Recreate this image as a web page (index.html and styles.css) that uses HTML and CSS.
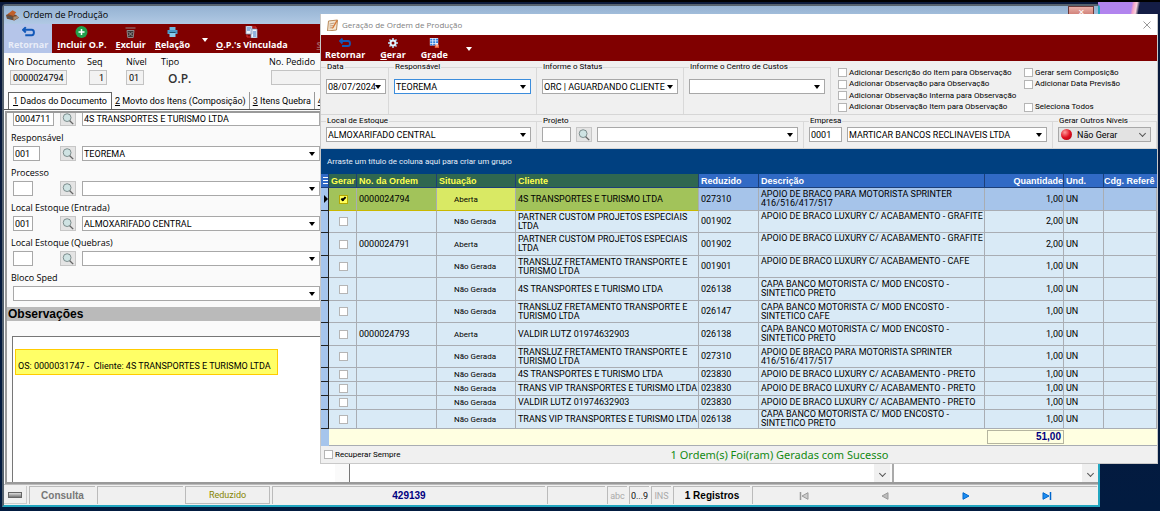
FILE: index.html
```
<!DOCTYPE html>
<html lang="pt-BR">
<head>
    <meta charset="UTF-8">
    <meta name="viewport" content="width=device-width, initial-scale=1.0">
    <title>Ordem de Produção</title>
    <link rel="stylesheet" href="styles.css">
</head>
<body>
    <!-- shared icons -->
    <svg class="sprite" width="0" height="0">
        <symbol id="icon-return" viewBox="0 0 12 10"><path d="M3.5 .5 1 3l2.500 2.500M1.500 3H9q2 0 2 2.500T9 8H3" fill="none" stroke="#1258b8" stroke-width="1.800"/></symbol>
        <symbol id="icon-search" viewBox="0 0 16 15"><circle cx="7" cy="6.500" r="4.500" fill="#cfe3e3" stroke="#6f7f80"/><path d="m10 10 4 4" stroke="#666" stroke-width="1.600"/></symbol>
        <symbol id="icon-first" viewBox="0 0 10 8"><path d="M1.500 0v8" stroke="currentColor" stroke-width="1.500"/><path d="M9 .7v6.600L3 4z" fill="#ccc" stroke="currentColor"/></symbol>
        <symbol id="icon-prev" viewBox="0 0 10 8"><path d="M8 .7v6.600L2 4z" fill="#bbb" stroke="currentColor"/></symbol>
        <symbol id="icon-next" viewBox="0 0 10 8"><path d="M2 .7v6.600L8 4z" fill="#1b8cf0" stroke="currentColor"/></symbol>
        <symbol id="icon-last" viewBox="0 0 10 8"><path d="M1 .7v6.600L7 4z" fill="#1b8cf0" stroke="currentColor"/><path d="M8.500 0v8" stroke="currentColor" stroke-width="1.500"/></symbol>
    </svg>

    <main class="window">
        <header class="titlebar">
            <svg class="app-icon" viewBox="0 0 14 12"><path d="m0 6 4-2 7 2 3 3-5 3-8-2z" fill="#7b4a2c"/><path d="m2 5 5-4 4 2-3 4z" fill="#c0602c"/><path d="m1 7 6 1v3l-6-2z" fill="#555"/><path d="m8 8 5-1v2l-5 3z" fill="#a98c70"/></svg>
            <span>Ordem de Produção</span>
            <button class="win-close" aria-label="Fechar">✕</button>
        </header>

        <nav class="toolbar">
            <button class="tool active"><svg viewBox="0 0 12 10"><use href="#icon-return"/></svg>Retornar</button>
            <button class="tool"><svg viewBox="0 0 12 12"><circle cx="6" cy="6" r="6" fill="#21a04b"/><path d="M6 3v6M3 6h6" stroke="#fff" stroke-width="1.500"/></svg><span><u>I</u>ncluir O.P.</span></button>
            <button class="tool"><svg viewBox="0 0 12 12"><path d="M1 2h10M2.500 4.500h7l-.8 7H3.300z" fill="#3b3232" stroke="#8d8585"/><path d="m4 6 4 4M8 6l-4 4" stroke="#9a9090"/></svg><span><u>E</u>xcluir</span></button>
            <button class="tool wide"><svg viewBox="0 0 12 12"><path d="M3 1h6v3H3z" fill="#6db7dd"/><path d="M1 4h10v4H1z" fill="#4a9ac8"/><path d="M3 7h6v4H3z" fill="#87cbec"/><path d="M3 6.500h6" stroke="#1c536f"/></svg><span><u>R</u>elação</span></button>
            <span class="drop"></span>
            <button class="tool"><svg viewBox="0 0 13 12"><path d="M1 0h6v8H1zM6 3h6v9H6z" fill="#eef3fa" stroke="#8aa0c0" stroke-width=".8"/><path d="M2 2h4M2 4h3M8 6h3M8 8h3M8 10h3" stroke="#3571bd"/><path d="m7 1 4 0v2M2 9v2h3" fill="none" stroke="#d33"/></svg><span><u>O</u>.P.'s Vinculada</span></button>
            <button class="tool faded" disabled><svg viewBox="0 0 12 12"></svg><span><u>S</u>air</span></button>
        </nav>

        <section class="document">
            <div class="doc-field"><label for="nro">Nro Documento</label><input id="nro" value="0000024794" readonly></div>
            <div class="doc-field seq"><label for="seq">Seq</label><input id="seq" value="1" readonly></div>
            <div class="doc-field nivel"><label for="nivel">Nível</label><input id="nivel" value="01" readonly></div>
            <div class="doc-field tipo"><span>Tipo</span><strong>O.P.</strong></div>
            <div class="doc-field pedido"><label for="pedido">No. Pedido</label><input id="pedido" readonly></div>
        </section>

        <nav class="tabs">
            <button class="tab selected"><u>1</u> Dados do Documento</button>
            <button class="tab"><u>2</u> Movto dos Itens (Composição)</button>
            <button class="tab"><u>3</u> Itens Quebra</button>
            <button class="tab"><u>4</u> S</button>
        </nav>

        <section class="page">
            <form class="fields">
                <div class="line">
                    <input class="code code-lg" value="0004711" aria-label="Código do cliente">
                    <button type="button" class="lookup" aria-label="Pesquisar"><svg><use href="#icon-search"/></svg></button>
                    <input class="client" value="4S TRANSPORTES E TURISMO LTDA" aria-label="Cliente">
                </div>
                <label for="resp">Responsável</label>
                <div class="line">
                    <input class="code code-md" value="001" aria-label="Código do responsável">
                    <button type="button" class="lookup" aria-label="Pesquisar"><svg><use href="#icon-search"/></svg></button>
                    <span class="combo"><select id="resp"><option>TEOREMA</option></select></span>
                </div>
                <label for="proc">Processo</label>
                <div class="line">
                    <input class="code" aria-label="Código do processo">
                    <button type="button" class="lookup" aria-label="Pesquisar"><svg><use href="#icon-search"/></svg></button>
                    <span class="combo"><select id="proc"><option></option></select></span>
                </div>
                <label for="entrada">Local Estoque (Entrada)</label>
                <div class="line">
                    <input class="code" value="001" aria-label="Código do local de entrada">
                    <button type="button" class="lookup" aria-label="Pesquisar"><svg><use href="#icon-search"/></svg></button>
                    <span class="combo"><select id="entrada"><option>ALMOXARIFADO CENTRAL</option></select></span>
                </div>
                <label for="quebras">Local Estoque (Quebras)</label>
                <div class="line">
                    <input class="code" aria-label="Código do local de quebras">
                    <button type="button" class="lookup" aria-label="Pesquisar"><svg><use href="#icon-search"/></svg></button>
                    <span class="combo"><select id="quebras"><option></option></select></span>
                </div>
                <label for="sped">Bloco Sped</label>
                <div class="line">
                    <span class="combo full"><select id="sped"><option></option></select></span>
                </div>
            </form>
            <h2>Observações</h2>
            <div class="memos">
                <div class="memo">
                    <p class="note">OS: 0000031747 -&nbsp; Cliente: 4S TRANSPORTES E TURISMO LTDA</p>
                </div>
                <div class="memo side"><span class="scroll"></span></div>
                <div class="memo last"><span class="scroll"></span></div>
            </div>
        </section>

        <footer class="statusbar">
            <button class="led" aria-label="Estado"><i></i></button>
            <span class="cell mode">Consulta</span>
            <span class="cell blank"></span>
            <button class="cell reduced">Reduzido</button>
            <span class="cell number">429139</span>
            <span class="cell gap"></span>
            <span class="cell key">abc</span>
            <span class="cell key on">0...9</span>
            <span class="cell key">INS</span>
            <span class="cell count">1 Registros</span>
            <span class="cell nav">
                <button aria-label="Primeiro" disabled><svg><use href="#icon-first"/></svg></button>
                <button aria-label="Anterior" disabled><svg><use href="#icon-prev"/></svg></button>
                <button aria-label="Próximo"><svg><use href="#icon-next"/></svg></button>
                <button aria-label="Último"><svg><use href="#icon-last"/></svg></button>
            </span>
        </footer>
    </main>

    <section class="dialog" role="dialog" aria-label="Geração de Ordem de Produção">
        <header class="dialog-title">
            <svg class="app-icon" viewBox="0 0 12 12"><path d="m2 2 9-1-1 10-9 1z" fill="#f4e6d2" stroke="#b98b5c"/><path d="m3 5 5-1M3 7l4-.5M3 9l3-.5" stroke="#b08c6c" stroke-width=".8"/><path d="m10 1-4 7-1 2 2-1 4-7z" fill="#d77b3a"/></svg>
            <span>Geração de Ordem de Produção</span>
            <button class="dialog-close" aria-label="Fechar"><svg viewBox="0 0 8 8"><path d="m.5.5 7 7m0-7-7 7" stroke="#999"/></svg></button>
        </header>

        <nav class="toolbar dialog-tools">
            <button class="tool"><svg viewBox="0 0 12 10"><use href="#icon-return"/></svg>Retornar</button>
            <button class="tool"><svg viewBox="0 0 12 12"><circle cx="6" cy="6" r="3" fill="none" stroke="#e6f5ff" stroke-width="2.400"/><path d="M6 0v2.500M6 9.500V12M0 6h2.500M9.500 6H12M1.800 1.800l1.700 1.700M8.500 8.500l1.700 1.700M1.800 10.200l1.700-1.700M8.500 3.500l1.700-1.700" stroke="#b9e2fb" stroke-width="1.800"/></svg><span><u>G</u>erar</span></button>
            <button class="tool"><svg viewBox="0 0 12 12"><path d="M1 0h10v9H1z" fill="#e8f1fc"/><path d="M1.500 1h2.500v2H1.500zM5 1h2.500v2H5zM8.500 1H11v2H8.500zM1.500 4h2.500v2H1.500zM5 4h2.500v2H5zM8.500 4H11v2H8.500zM1.500 7h2.500v2H1.500zM5 7h2.500v2H5z" fill="#2f7fe0"/><path d="M7 8h5v4H7z" fill="#e9572e"/><path d="M8 9.500h3" stroke="#fff"/></svg><span>G<u>r</u>ade</span></button>
            <span class="drop"></span>
        </nav>

        <form class="filters">
            <div class="filter-row first">
                <fieldset class="date"><legend><label for="data">Data</label></legend>
                    <span class="combo"><select id="data"><option>08/07/2024</option></select></span>
                </fieldset>
                <fieldset><legend><label for="resp2">Responsável</label></legend>
                    <span class="combo focused"><select id="resp2"><option>TEOREMA</option></select></span>
                </fieldset>
                <fieldset><legend><label for="status">Informe o Status</label></legend>
                    <span class="combo"><select id="status"><option>ORC | AGUARDANDO CLIENTE</option></select></span>
                </fieldset>
                <fieldset><legend><label for="custos">Informe o Centro de Custos</label></legend>
                    <span class="combo"><select id="custos"><option></option></select></span>
                </fieldset>
                <div class="checks">
                    <label><input type="checkbox">Adicionar Descrição do Item para Observação</label>
                    <label><input type="checkbox">Gerar sem Composição</label>
                    <label><input type="checkbox">Adicionar Observação para Observação</label>
                    <label><input type="checkbox">Adicionar Data Previsão</label>
                    <label class="alone"><input type="checkbox">Adicionar Observação Interna para Observação</label>
                    <label><input type="checkbox">Adicionar Observação Item para Observação</label>
                    <label><input type="checkbox">Seleciona Todos</label>
                </div>
            </div>
            <div class="filter-row second">
                <fieldset><legend><label for="estoque">Local de Estoque</label></legend>
                    <span class="combo"><select id="estoque"><option>ALMOXARIFADO CENTRAL</option></select></span>
                </fieldset>
                <fieldset><legend><label for="projeto">Projeto</label></legend>
                    <input class="code code-proj" id="projeto">
                    <button type="button" class="lookup" aria-label="Pesquisar"><svg><use href="#icon-search"/></svg></button>
                    <span class="combo"><select aria-label="Projeto"><option></option></select></span>
                </fieldset>
                <fieldset><legend><label for="empresa">Empresa</label></legend>
                    <input class="code code-emp" id="empresa" value="0001">
                    <span class="combo"><select aria-label="Empresa"><option>MARTICAR BANCOS RECLINAVEIS LTDA</option></select></span>
                </fieldset>
                <fieldset><legend><label for="niveis">Gerar Outros Níveis</label></legend>
                    <span class="combo flat"><i class="ball"></i><select id="niveis"><option>Não Gerar</option></select></span>
                </fieldset>
            </div>
        </form>

        <div class="group-panel">Arraste um título de coluna aqui para criar um grupo</div>

        <div class="grid">
            <table>
                <colgroup>
                    <col class="c-mark"><col class="c-gerar"><col class="c-ordem"><col class="c-sit"><col class="c-cli"><col class="c-red"><col class="c-desc"><col class="c-qtd"><col class="c-und"><col>
                </colgroup>
                <thead>
                    <tr><th class="mark"><i class="dots"></i></th><th class="hl">Gerar</th><th class="hl">No. da Ordem</th><th class="hl">Situação</th><th class="hl">Cliente</th><th>Reduzido</th><th>Descrição</th><th class="num">Quantidade</th><th>Und.</th><th>Cdg. Referê</th></tr>
                </thead>
                <tbody>
                    <tr class="current"><td class="mark"><i class="pointer"></i></td><td><input type="checkbox" checked aria-label="Gerar"></td><td>0000024794</td><td>Aberta</td><td>4S TRANSPORTES E TURISMO LTDA</td><td>027310</td><td>APOIO DE BRACO PARA MOTORISTA SPRINTER<br>416/516/417/517</td><td>1,00</td><td>UN</td><td></td></tr>
                    <tr><td class="mark"></td><td><input type="checkbox" aria-label="Gerar"></td><td></td><td>Não Gerada</td><td>PARTNER CUSTOM PROJETOS ESPECIAIS<br>LTDA</td><td>001902</td><td class="top">APOIO DE BRACO LUXURY C/ ACABAMENTO - GRAFITE</td><td>2,00</td><td>UN</td><td></td></tr>
                    <tr><td class="mark"></td><td><input type="checkbox" aria-label="Gerar"></td><td>0000024791</td><td>Aberta</td><td>PARTNER CUSTOM PROJETOS ESPECIAIS<br>LTDA</td><td>001902</td><td class="top">APOIO DE BRACO LUXURY C/ ACABAMENTO - GRAFITE</td><td>2,00</td><td>UN</td><td></td></tr>
                    <tr><td class="mark"></td><td><input type="checkbox" aria-label="Gerar"></td><td></td><td>Não Gerada</td><td>TRANSLUZ FRETAMENTO TRANSPORTE E<br>TURISMO LTDA</td><td>001901</td><td class="top">APOIO DE BRACO LUXURY C/ ACABAMENTO - CAFE</td><td>1,00</td><td>UN</td><td></td></tr>
                    <tr><td class="mark"></td><td><input type="checkbox" aria-label="Gerar"></td><td></td><td>Não Gerada</td><td>4S TRANSPORTES E TURISMO LTDA</td><td>026138</td><td>CAPA BANCO MOTORISTA C/ MOD ENCOSTO -<br>SINTETICO PRETO</td><td>1,00</td><td>UN</td><td></td></tr>
                    <tr><td class="mark"></td><td><input type="checkbox" aria-label="Gerar"></td><td></td><td>Não Gerada</td><td>TRANSLUZ FRETAMENTO TRANSPORTE E<br>TURISMO LTDA</td><td>026147</td><td>CAPA BANCO MOTORISTA C/ MOD ENCOSTO -<br>SINTETICO CAFE</td><td>1,00</td><td>UN</td><td></td></tr>
                    <tr><td class="mark"></td><td><input type="checkbox" aria-label="Gerar"></td><td>0000024793</td><td>Aberta</td><td>VALDIR LUTZ 01974632903</td><td>026138</td><td>CAPA BANCO MOTORISTA C/ MOD ENCOSTO -<br>SINTETICO PRETO</td><td>1,00</td><td>UN</td><td></td></tr>
                    <tr><td class="mark"></td><td><input type="checkbox" aria-label="Gerar"></td><td></td><td>Não Gerada</td><td>TRANSLUZ FRETAMENTO TRANSPORTE E<br>TURISMO LTDA</td><td>027310</td><td>APOIO DE BRACO PARA MOTORISTA SPRINTER<br>416/516/417/517</td><td>1,00</td><td>UN</td><td></td></tr>
                    <tr class="short"><td class="mark"></td><td><input type="checkbox" aria-label="Gerar"></td><td></td><td>Não Gerada</td><td>4S TRANSPORTES E TURISMO LTDA</td><td>023830</td><td>APOIO DE BRACO LUXURY C/ ACABAMENTO - PRETO</td><td>1,00</td><td>UN</td><td></td></tr>
                    <tr class="short"><td class="mark"></td><td><input type="checkbox" aria-label="Gerar"></td><td></td><td>Não Gerada</td><td>TRANS VIP TRANSPORTES E TURISMO LTDA</td><td>023830</td><td>APOIO DE BRACO LUXURY C/ ACABAMENTO - PRETO</td><td>1,00</td><td>UN</td><td></td></tr>
                    <tr class="short"><td class="mark"></td><td><input type="checkbox" aria-label="Gerar"></td><td></td><td>Não Gerada</td><td>VALDIR LUTZ 01974632903</td><td>023830</td><td>APOIO DE BRACO LUXURY C/ ACABAMENTO - PRETO</td><td>1,00</td><td>UN</td><td></td></tr>
                    <tr class="cut"><td class="mark"></td><td><input type="checkbox" aria-label="Gerar"></td><td></td><td>Não Gerada</td><td>TRANS VIP TRANSPORTES E TURISMO LTDA</td><td>026138</td><td>CAPA BANCO MOTORISTA C/ MOD ENCOSTO -<br>SINTETICO PRETO</td><td>1,00</td><td>UN</td><td></td></tr>
                </tbody>
                <tfoot>
                    <tr><td class="mark"></td><td colspan="6"></td><td class="total"><output>51,00</output></td><td colspan="2"></td></tr>
                </tfoot>
            </table>
        </div>

        <footer class="dialog-foot">
            <label><input type="checkbox">Recuperar Sempre</label>
            <p>1 Ordem(s) Foi(ram) Geradas com Sucesso</p>
        </footer>
    </section>
</body>
</html>
```

FILE: styles.css
```
:root {
    --sans: Roboto, sans-serif;
    --label: "Open Sans", "Noto Sans", sans-serif;
    --bold: "Liberation Sans", Arial, sans-serif;
    --red: #800000;
}
* {
    box-sizing: border-box;
}
body {
    margin: 0;
    min-height: 100vh;
    padding: 2px 60px 4px 2px;
    display: flex;
    position: relative;
    font: 9px/12px var(--sans);
    color: #000;
    border-top: 2px solid #000;
    background:
        linear-gradient(100deg, #b184ee 0, #b184ee 34px, #f4a3c8 36px, #f9d3dd 39px, #141d45 42px, #141d45 100%) right top / 62px 14px no-repeat,
        linear-gradient(#0a1a3c, #021b40) #021b40;
}
button, input, select {
    font: inherit;
    color: inherit;
    margin: 0;
    padding: 0;
    border: 0;
    border-radius: 0;
    background: none;
}
.sprite {
    position: absolute;
}
.window {
    flex: 1;
    min-width: 0;
    display: flex;
    flex-direction: column;
    border: 2px solid #55626e;
    border-right-color: #22a6c0;
    border-bottom-color: #22a6c0;
    border-radius: 4px 4px 0 0;
    background: #fafafa;
}

/* title bars */
.titlebar {
    height: 18px;
    display: flex;
    align-items: center;
    gap: 4px;
    padding: 0 4px 0 2px;
    font: 9px/16px var(--label);
    background: linear-gradient(#94b2d2, #b1c9e4);
}
.app-icon {
    width: 13px;
    height: 12px;
}
.win-close {
    margin-left: auto;
    align-self: flex-start;
    width: 26px;
    height: 12px;
    font-size: 8px;
    line-height: 10px;
    color: #fff;
    border: 1px solid #6b3b3b;
    background: linear-gradient(#e8b0a8, #c86f68);
}

/* toolbars */
.toolbar {
    height: 29px;
    display: flex;
    color: #fff;
    background: var(--red);
    font: bold 9px/12px var(--label);
}
.tool {
    display: flex;
    flex-direction: column;
    align-items: center;
    justify-content: flex-end;
    padding: 0 4px 2px;
    white-space: nowrap;
}
.tool + .tool {
    padding: 0 4px 2px 5px;
}
.tool svg {
    width: 13px;
    height: 12px;
    margin-bottom: 1px;
}
.tool.active {
    color: #e9edf8;
    background: #b5c5e9;
}
.tool.faded {
    color: #a05a5a;
    margin-left: 20px;
}
.drop {
    align-self: center;
    margin: 2px 4px 0 8px;
    border: 3px solid transparent;
    border-top: 4px solid #fff;
    border-bottom: 0;
}

/* document header */
.document {
    height: 39px;
    display: flex;
    padding: 2px 4px 0;
    font: 9px/14px var(--label);
}
.doc-field {
    display: flex;
    flex-direction: column;
    gap: 1px;
    width: 79px;
}
.doc-field input {
    width: 57px;
    height: 15px;
    margin-left: 2px;
    padding: 0 2px;
    font: 9px/12px var(--sans);
    border: 1px solid #c3c3c3;
    background: #f2f2f2;
}
.doc-field.seq { width: 39px; }
.seq input { width: 18px; text-align: right; }
.doc-field.nivel { width: 35px; }
.nivel input { width: 18px; margin-left: 0; }
.doc-field.tipo { width: 108px; }
.tipo strong {
    font: 600 12px/18px var(--label);
    padding-left: 7px;
    color: #333;
}
.pedido { white-space: nowrap; }

/* tabs */
.tabs {
    height: 18px;
    display: flex;
    padding-left: 4px;
    border-bottom: 1px solid #555;
}
.tab {
    padding: 0 3px;
    white-space: nowrap;
    border-right: 1px solid #999;
}
.tab.selected {
    padding: 0 4px;
    border: 1px solid #666;
    border-bottom: 0;
    background: #fff;
}

/* document page */
.page {
    flex: 1;
    display: flex;
    flex-direction: column;
    margin: 1px 0 0 1px;
    border: 2px solid #9a9a9a;
    border-right: 0;
    overflow: hidden;
}
.fields {
    width: 315px;
    padding: 0 2px 6px 6px;
    margin-top: -2px;
}
.fields > label {
    display: block;
    margin-left: -2px;
    padding-top: 4px;
    font: 9px/16px var(--label);
}
.line {
    display: flex;
    height: 15px;
}
.code, .client {
    width: 20px;
    height: 15px;
    padding: 0 1px;
    border: 1px solid #a8a8a8;
    background: #fff;
}
.code-md { width: 27px; }
.code-lg { width: 41px; }
.code-proj { width: 29px; }
.code-emp { width: 33px; }
.lookup {
    width: 16px;
    height: 15px;
    border: 1px solid #c6c6c6;
    background: #e4e4e4;
}
.lookup svg {
    display: block;
    width: 14px;
    height: 13px;
}
.line .lookup {
    margin: 0 6px 0 auto;
}
.line .combo, .line .client {
    flex: 0 0 238px;
}
.line .combo.full {
    flex: 1;
}

/* select with a small solid arrow */
.combo {
    display: grid;
    align-items: center;
    height: 15px;
    border: 1px solid #a8a8a8;
    background: #fff;
}
.combo select {
    grid-area: 1 / 1;
    width: 100%;
    height: 13px;
    padding: 0 8px 0 1px;
    appearance: none;
    outline: 0;
}
.combo::after {
    content: "";
    grid-area: 1 / 1;
    justify-self: end;
    margin-right: 4px;
    border: 3px solid transparent;
    border-top: 4px solid #000;
    border-bottom: 0;
    pointer-events: none;
}
.combo.focused {
    border-color: #3c8ddc;
}

h2 {
    margin: 0;
    padding-left: 1px;
    font: bold 12px/14px var(--bold);
    background: #bababa;
}
.memos {
    flex: 1;
    display: flex;
    padding: 15px 0 0 5px;
}
.memo {
    flex: 0 0 323px;
    border: 1px solid #777;
    border-width: 1px 0 0 1px;
    background: #fff;
}
.memo.side {
    flex: 1;
    margin-left: 14px;
}
.memo.last {
    flex: 0 0 206px;
    margin-left: 2px;
    border-left: 2px solid #aaa;
}
.memo.side, .memo.last {
    display: flex;
    justify-content: flex-end;
    align-items: flex-end;
}
.scroll {
    width: 16px;
    height: 18px;
    display: grid;
    place-items: center;
    background: #f0f0f0;
}
.scroll::after, .flat::after {
    content: "";
    width: 4px;
    height: 4px;
    border: solid #555;
    border-width: 0 1px 1px 0;
    transform: rotate(45deg);
}
.note {
    width: max-content;
    margin: 12px 0 0 2px;
    padding: 10px 6px 2px 2px;
    border: 1px solid #ffcc00;
    background: #ffff66;
}

/* status bar */
.statusbar {
    height: 21px;
    display: flex;
    gap: 2px;
    padding: 1px 1px 1px 0;
    border-top: 1px solid #bbb;
    background: #f0f0f0;
}
.led {
    width: 23px;
    display: grid;
    place-items: center;
    border: 1px solid #ccc;
    border-width: 0 1px 1px 0;
}
.led i {
    width: 14px;
    height: 6px;
    border: 1px solid #666;
    background: linear-gradient(#ddd, #777);
}
.cell {
    display: grid;
    place-items: center;
    border: 1px solid #bbb;
    border-width: 1px 0 0 1px;
    font: bold 10px/12px var(--bold);
}
.mode { width: 66px; color: #777; }
.blank { width: 86px; }
.reduced {
    width: 85px;
    color: #858500;
    font: 9px/12px var(--sans);
    border-width: 1px;
}
.number { flex: 1; color: #000080; }
.gap { width: 58px; }
.key {
    width: 20px;
    font: 9px/12px var(--sans);
    color: #aaa;
}
.key.on { color: #111; }
.count { width: 77px; }
.nav {
    width: 345px;
    grid-template-columns: repeat(4, 81px);
    justify-content: center;
    color: #999;
}
.nav button:enabled {
    color: #0066cc;
}
.nav svg {
    display: block;
    width: 10px;
    height: 8px;
}

/* dialog over the main window */
.dialog {
    position: absolute;
    top: 12px;
    left: 320px;
    right: 2px;
    display: flex;
    flex-direction: column;
    border: 1px solid #c9c9c9;
    border-top: 0;
    background: #f0f0f0;
}
.dialog-title {
    height: 21px;
    display: flex;
    align-items: center;
    gap: 3px;
    padding: 0 6px 0 5px;
    font: 8px/16px var(--label);
    color: #808080;
    background: #fff;
}
.dialog-close {
    margin-left: auto;
}
.dialog-close svg {
    display: block;
    width: 8px;
    height: 8px;
}
.dialog-tools {
    height: 26px;
    gap: 6px;
    line-height: 11px;
}
.dialog-tools .tool {
    padding-bottom: 1px;
}
.dialog-tools .tool svg {
    width: 12px;
    height: 10px;
}
.filter-row {
    display: grid;
    border-bottom: 1px solid #d6d6d6;
}
.first {
    grid-template-columns: 68px 148px 147px 147px 1fr;
    height: 54px;
}
.second {
    grid-template-columns: 216px 267px 249px 1fr;
    height: 34px;
}
fieldset {
    min-width: 0;
    margin: 0;
    padding: 6px 5px 0;
    border: 1px solid #d9d9d9;
    border-width: 1px 1px 0 0;
}
.date {
    padding-right: 2px;
}
.second fieldset {
    display: flex;
    gap: 5px;
    padding-top: 0;
}
.second .combo {
    flex: 1;
}
legend {
    padding: 0 1px;
    font-size: 8px;
}
.checks {
    display: grid;
    grid-template-columns: 186px 1fr;
    align-content: space-between;
    padding: 6px 0 1px 7px;
}
.checks label, .dialog-foot label {
    display: flex;
    align-items: center;
    gap: 2px;
    font-size: 8px;
    white-space: nowrap;
}
.checks label {
    height: 11px;
}
.alone {
    grid-column: 1 / -1;
}
input[type="checkbox"] {
    appearance: none;
    display: grid;
    place-items: center;
    flex: none;
    width: 9px;
    height: 9px;
    border: 1px solid #b5b5b5;
    background: #fff;
}
input[type="checkbox"]:checked::after {
    content: "";
    width: 1px;
    height: 3px;
    margin-bottom: 1px;
    border: solid #000;
    border-width: 0 2px 2px 0;
    transform: rotate(45deg);
}
.combo.flat {
    grid-template-columns: 17px 1fr;
    background: #e3e3e3;
}
.flat select {
    grid-area: 1 / 2;
}
.combo.flat::after {
    grid-area: 1 / 2;
    border: solid #555;
    border-width: 0 1px 1px 0;
    margin: 0 5px 2px 0;
}
.ball {
    width: 11px;
    height: 11px;
    margin-left: 2px;
    border-radius: 50%;
    background: radial-gradient(circle at 35% 30%, #ff9a9a, #e01020 50%, #a00010);
}

/* order grid */
.group-panel {
    height: 25px;
    padding-left: 6px;
    font-size: 8px;
    line-height: 25px;
    color: #e6eef8;
    background: #004080;
}
.grid {
    overflow: hidden;
}
table {
    width: 100%;
    table-layout: fixed;
    border-collapse: separate;
    border-spacing: 0;
    line-height: 9px;
}
.c-mark { width: 8px; }
.c-gerar { width: 28px; }
.c-ordem { width: 80px; }
.c-sit { width: 79px; }
.c-cli { width: 183px; }
.c-red { width: 60px; }
.c-desc { width: 226px; }
.c-qtd { width: 79px; }
.c-und { width: 40px; }
th {
    height: 14px;
    padding: 0 0 0 2px;
    font: bold 9px/12px var(--bold);
    text-align: left;
    white-space: nowrap;
    overflow: hidden;
    color: #fff;
    background: #316ac5;
    border-right: 1px solid #1d3f78;
    border-bottom: 1px solid #1d3f78;
}
th:last-child {
    padding-left: 0;
    border-right: 0;
}
th.hl {
    color: #ffff4d;
    background: #2f6750;
}
th.num {
    text-align: right;
}
td {
    height: 22px;
    padding: 0 0 0 2px;
    white-space: nowrap;
    overflow: hidden;
    background: #d9eaf6;
    border-right: 1px solid #a9adb3;
    border-bottom: 1px solid #a9adb3;
}
tbody tr:nth-child(odd) td { height: 23px; }
tbody .short td,
tbody .short:nth-child(odd) td { height: 14px; }
tbody .cut td { height: 19px; }
tbody td:nth-child(2) input { margin: auto; }
tbody td:nth-child(4) { padding-left: 17px; font-size: 8px; }
tbody td:nth-child(8) { text-align: right; }
td.top {
    vertical-align: top;
    padding-top: 1px;
}
td.mark, tbody td.mark {
    padding: 0;
    background: #a6c5ec;
    border-right-color: #222;
    border-bottom-color: #222;
}
.current td {
    background: #a6c4ea;
}
.current td:nth-child(n+2):nth-child(-n+5) {
    background: #a2c35a;
    border-bottom-color: #c9b800;
}
.current td:nth-child(4):nth-child(-n+5) {
    background: #d9e964;
}
.current input[type="checkbox"] {
    border-color: #b4a800;
    background: #ffff5a;
}
.dots {
    display: block;
    width: 5px;
    height: 7px;
    background: repeating-linear-gradient(#fff 0 1px, transparent 1px 3px);
}
.pointer {
    display: block;
    width: 0;
    margin-left: 3px;
    border: 4px solid transparent;
    border-left: 4px solid #000;
    border-right: 0;
}
tfoot td {
    height: 17px;
    background: #ffffe1;
    border-right: 0;
}
tfoot td.mark {
    border: 0;
}
.total output {
    display: block;
    height: 14px;
    padding-right: 2px;
    font: bold 10px/12px var(--bold);
    text-align: right;
    color: #000080;
    border: 1px solid #b5b5a0;
}
.dialog-foot {
    height: 17px;
    display: grid;
    grid-template-columns: 1fr auto 1fr;
    align-items: center;
    padding: 0 4px 0 3px;
}
.dialog-foot p {
    margin: 0;
    padding-left: 82px;
    font: 11px/16px "Noto Sans", sans-serif;
    color: #138a13;
}
```
